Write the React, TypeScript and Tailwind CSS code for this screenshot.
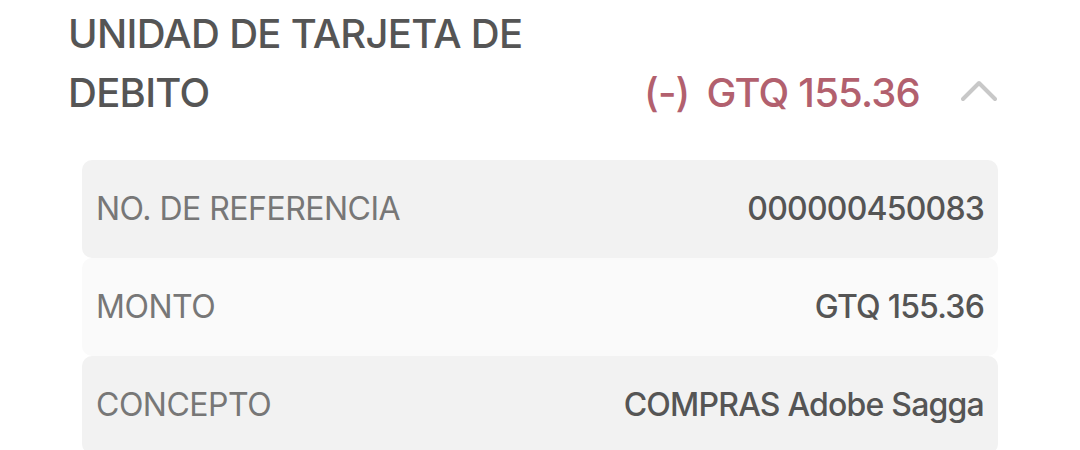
const rows = [
  { label: "NO. DE REFERENCIA", value: "000000450083" },
  { label: "MONTO", value: "GTQ 155.36" },
  { label: "CONCEPTO", value: "COMPRAS Adobe Sagga" },
];

export default function App() {
  return (
    <div className="min-h-[450px] w-[1080px] overflow-hidden bg-white font-['Inter',sans-serif]">
      {/* Header */}
      <div className="flex items-end justify-between pl-[68px] pr-[83px] pt-[4px]">
        <h2 className="w-[480px] text-[40px] font-medium leading-[59px] tracking-[-0.7px] text-[#555555]">
          UNIDAD DE TARJETA DE DEBITO
        </h2>
        <div className="flex items-center">
          <span className="text-[40px] font-medium leading-[59px] tracking-[-0.8px] text-[#b2606e]">
            (-)<span className="ml-[17px]">GTQ 155.36</span>
          </span>
          <svg
            className="ml-[41px] mt-[-4px]"
            width="36"
            height="22"
            viewBox="0 0 36 22"
            fill="none"
            stroke="#c8c8c8"
            strokeWidth="4"
            strokeLinecap="round"
            strokeLinejoin="round"
          >
            <polyline points="2,19 18,3 34,19" />
          </svg>
        </div>
      </div>

      {/* Detail rows */}
      <div className="mx-[82px] mt-[38px] flex flex-col">
        {rows.map((row, i) => (
          <div
            key={row.label}
            className={`flex h-[98px] items-center justify-between rounded-[10px] px-[14px] ${
              i % 2 === 0 ? "bg-[#f2f2f2]" : "bg-[#fafafa]"
            }`}
          >
            <span className="text-[32px] font-normal tracking-[-0.5px] text-[#777777]">{row.label}</span>
            <span className="text-[32px] font-medium tracking-[-0.8px] text-[#555555]">{row.value}</span>
          </div>
        ))}
      </div>
    </div>
  );
}
